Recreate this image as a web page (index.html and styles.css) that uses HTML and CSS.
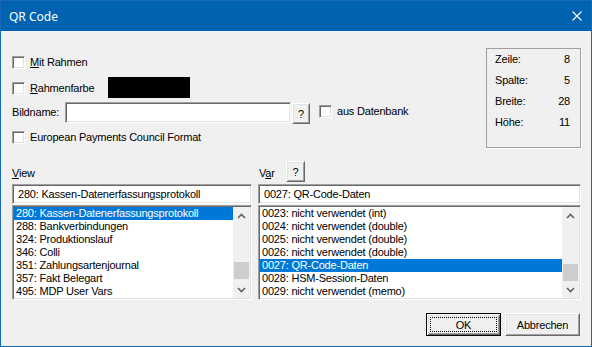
FILE: index.html
```html
<!DOCTYPE html>
<html lang="de">
	<head>
		<meta charset="UTF-8" />
		<title>QR Code</title>
		<link rel="stylesheet" href="styles.css">
	</head>
	<body>
		<div class="window">
			<div class="titlebar">
				<span class="title">QR Code</span>
				<svg class="close" width="10" height="10" viewBox="0 0 10 10">
					<path d="M0.5 0.5 L9.5 9.5 M9.5 0.5 L0.5 9.5" stroke="#fff" stroke-width="1.1" fill="none" />
				</svg>
			</div>

			<div class="client">
				<div class="top">
					<div class="options">
						<div class="row row-mit">
							<label class="option"><span class="check"></span><span><u>M</u>it Rahmen</span></label>
						</div>
						<div class="row row-farbe">
							<label class="option option-farbe"><span class="check"></span><span><u>R</u>ahmenfarbe</span></label>
							<span class="swatch"></span>
						</div>
						<div class="row row-bild">
							<span class="bild-label">Bildname:</span>
							<span class="edit bild-edit"></span>
							<span class="btn small-btn bild-btn">?</span>
							<label class="option db-option"><span class="check"></span><span>aus Datenbank</span></label>
						</div>
						<div class="row row-epc">
							<label class="option"><span class="check"></span><span>European Payments Council Format</span></label>
						</div>
					</div>

					<div class="info">
						<div class="info-row"><span>Zeile:</span><span>8</span></div>
						<div class="info-row"><span>Spalte:</span><span>5</span></div>
						<div class="info-row gap-big"><span>Breite:</span><span>28</span></div>
						<div class="info-row"><span>Höhe:</span><span>11</span></div>
					</div>
				</div>

				<div class="lists">
					<div class="col col-view">
						<div class="col-head"><span class="head-label"><u>V</u>iew</span></div>
						<div class="edit field">280: Kassen-Datenerfassungsprotokoll</div>
						<div class="listbox">
							<ul class="items">
								<li class="selected">280: Kassen-Datenerfassungsprotokoll</li>
								<li>288: Bankverbindungen</li>
								<li>324: Produktionslauf</li>
								<li>346: Colli</li>
								<li>351: Zahlungsartenjournal</li>
								<li>357: Fakt Belegart</li>
								<li>495: MDP User Vars</li>
							</ul>
							<div class="scrollbar">
								<div class="sb-btn">
									<svg width="9" height="6" viewBox="0 0 9 6"><path d="M1 5 L4.5 1.5 L8 5" stroke="#606060" stroke-width="1.6" fill="none" /></svg>
								</div>
								<div class="sb-track"><div class="sb-thumb" style="margin-top: 38px"></div></div>
								<div class="sb-btn">
									<svg width="9" height="6" viewBox="0 0 9 6"><path d="M1 1 L4.5 4.5 L8 1" stroke="#606060" stroke-width="1.6" fill="none" /></svg>
								</div>
							</div>
						</div>
					</div>

					<div class="col col-var">
						<div class="col-head">
							<span class="head-label var-label">V<u>a</u>r</span>
							<span class="btn small-btn var-btn">?</span>
						</div>
						<div class="edit field">0027: QR-Code-Daten</div>
						<div class="listbox">
							<ul class="items">
								<li>0023: nicht verwendet (int)</li>
								<li>0024: nicht verwendet (double)</li>
								<li>0025: nicht verwendet (double)</li>
								<li>0026: nicht verwendet (double)</li>
								<li class="selected">0027: QR-Code-Daten</li>
								<li>0028: HSM-Session-Daten</li>
								<li>0029: nicht verwendet (memo)</li>
							</ul>
							<div class="scrollbar">
								<div class="sb-btn">
									<svg width="9" height="6" viewBox="0 0 9 6"><path d="M1 5 L4.5 1.5 L8 5" stroke="#606060" stroke-width="1.6" fill="none" /></svg>
								</div>
								<div class="sb-track"><div class="sb-thumb" style="margin-top: 40px"></div></div>
								<div class="sb-btn">
									<svg width="9" height="6" viewBox="0 0 9 6"><path d="M1 1 L4.5 4.5 L8 1" stroke="#606060" stroke-width="1.6" fill="none" /></svg>
								</div>
							</div>
						</div>
					</div>
				</div>

				<div class="buttons">
					<span class="btn push default"><span class="focus">OK</span></span>
					<span class="btn push">Abbrechen</span>
				</div>
			</div>
		</div>
	</body>
</html>
```

FILE: styles.css
```css
* {
	box-sizing: border-box;
	margin: 0;
	padding: 0;
}

body {
	font-family: "Liberation Sans", Arial, sans-serif;
	font-size: 11px;
	letter-spacing: -0.2px;
	color: #000;
	background: #fff;
}

u {
	text-decoration: underline;
	text-underline-offset: 1px;
}

.window {
	width: 592px;
	height: 347px;
	border: 1px solid #1668b8;
	background: #f0f0f0;
	display: flex;
	flex-direction: column;
}

.titlebar {
	height: 30px;
	background: #0063b1;
	color: #fff;
	display: flex;
	align-items: center;
	justify-content: space-between;
	padding: 0 9px 0 8px;
	font-family: "Noto Sans", "Open Sans", sans-serif;
	font-size: 12px;
	letter-spacing: 0;
}

.close {
	display: block;
}

.client {
	flex: 1;
	padding: 0 10px 0 11px;
}

/* top part */
.top {
	display: flex;
	justify-content: space-between;
	height: 117px;
}

.options {
	padding-top: 25px;
}

.row {
	display: flex;
	align-items: flex-start;
}

.row-mit {
	height: 13px;
}

.row-farbe {
	margin-top: 8px;
	height: 21px;
}

.row-bild {
	margin-top: 4px;
	height: 22px;
}

.row-epc {
	margin-top: 7px;
	height: 13px;
}

.option {
	display: flex;
	align-items: center;
	gap: 5px;
	height: 13px;
	line-height: 13px;
	white-space: nowrap;
}

.option-farbe {
	margin-top: 5px;
	width: 96px;
}

.check {
	width: 13px;
	height: 13px;
	background: #fff;
	border: 1px solid;
	border-color: #a0a0a0 #fff #fff #a0a0a0;
	box-shadow: inset 1px 1px #696969, inset -1px -1px #e3e3e3;
}

.swatch {
	width: 82px;
	height: 21px;
	background: #000;
}

.bild-label {
	width: 53px;
	line-height: 21px;
}

.edit {
	background: #fff;
	border: 1px solid;
	border-color: #a0a0a0 #fff #fff #a0a0a0;
	box-shadow: inset 1px 1px #696969, inset -1px -1px #e3e3e3;
}

.bild-edit {
	width: 226px;
	height: 21px;
}

.btn {
	display: flex;
	align-items: center;
	justify-content: center;
	background: #f0f0f0;
	border: 1px solid;
	border-color: #fff #696969 #696969 #fff;
	box-shadow: inset 1px 1px #e3e3e3, inset -1px -1px #a0a0a0;
}

.small-btn {
	width: 18px;
	height: 21px;
}

.bild-btn {
	margin-left: 1px;
	margin-top: 1px;
}

.db-option {
	margin-left: 9px;
	margin-top: 3px;
}

.info {
	margin-top: 17px;
	width: 95px;
	height: 100px;
	border: 1px solid #a0a0a0;
	box-shadow: 1px 1px #fff;
	padding: 4px 10px 0 8px;
}

.info-row {
	display: flex;
	justify-content: space-between;
	height: 13px;
	line-height: 13px;
	margin-bottom: 8px;
}

.info-row.gap-big {
	margin-top: 5px;
}

/* lists */
.lists {
	margin-top: 13px;
	display: flex;
	gap: 6px;
}

.col-view {
	width: 240px;
}

.col-var {
	width: 323px;
}

.col-head {
	height: 21px;
	display: flex;
	align-items: flex-start;
}

.head-label {
	line-height: 13px;
	margin-top: 6px;
}

.var-label {
	width: 28px;
	padding-left: 1px;
}

.var-btn {
	width: 19px;
}

.field {
	margin-top: 2px;
	height: 20px;
	line-height: 18px;
	padding-left: 5px;
	white-space: nowrap;
}

.listbox {
	margin-top: 1px;
	height: 95px;
	padding: 1px;
	display: flex;
}

.listbox.edit,
.listbox {
	background: #fff;
	border: 1px solid;
	border-color: #a0a0a0 #fff #fff #a0a0a0;
	box-shadow: inset 1px 1px #696969, inset -1px -1px #e3e3e3;
}

.items {
	flex: 1;
	list-style: none;
	overflow: hidden;
}

.items li {
	height: 13px;
	line-height: 13px;
	padding-left: 2px;
	white-space: nowrap;
}

.items li.selected {
	background: #0078d7;
	color: #fff;
}

.scrollbar {
	width: 17px;
	background: #f0f0f0;
	display: flex;
	flex-direction: column;
}

.sb-btn {
	height: 17px;
	display: flex;
	align-items: center;
	justify-content: center;
}

.sb-btn svg {
	display: block;
}

.sb-track {
	flex: 1;
}

.sb-thumb {
	width: 15px;
	height: 17px;
	margin-left: 1px;
	background: #cdcdcd;
}

/* dialog buttons */
.buttons {
	margin-top: 13px;
	display: flex;
	justify-content: flex-end;
	gap: 4px;
	padding-right: 1px;
}

.push {
	width: 75px;
	height: 23px;
}

.push.default {
	border: 1px solid #000;
	box-shadow: inset 1px 1px #fff, inset -1px -1px #696969, inset 2px 2px #e3e3e3, inset -2px -2px #a0a0a0;
	padding: 3px;
}

.focus {
	flex: 1;
	align-self: stretch;
	display: flex;
	align-items: center;
	justify-content: center;
	border: 1px dotted #000;
}
```
